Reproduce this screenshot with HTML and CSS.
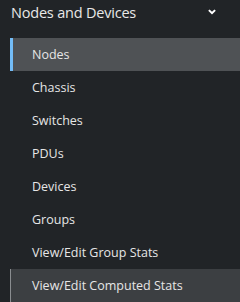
FILE: index.html
```html
<!DOCTYPE html>
<html lang="en">
<head>
  <meta charset="UTF-8">
  <title>Nodes and Devices</title>
  <link rel="stylesheet" href="styles.css">
</head>
<body>

<nav class="nav-grupo">
  <div class="nav-titulo">
    <span>Nodes and Devices</span>
    <svg class="chevron" width="8" height="7" viewBox="0 0 8 7">
      <path d="M0.2 1.8 L1.6 0.4 L4 2.8 L6.4 0.4 L7.8 1.8 L4 5.6 Z" fill="#fff"/>
    </svg>
  </div>
  <ul class="nav-lista">
    <li class="activo">Nodes</li>
    <li>Chassis</li>
    <li>Switches</li>
    <li>PDUs</li>
    <li>Devices</li>
    <li>Groups</li>
    <li>View/Edit Group Stats</li>
    <li class="hover">View/Edit Computed Stats</li>
  </ul>
</nav>

</body>
</html>
```

FILE: styles.css
```css
body {
  margin: 0;
  background: #212427;
  font-family: "Open Sans", sans-serif;
  color: #f0f0f0;
}
.nav-grupo {
  width: 240px;
  height: 302px;
  overflow: hidden;
}
.nav-titulo {
  height: 38px;
  display: flex;
  align-items: flex-start;
  justify-content: space-between;
  padding: 3px 24px 0 11px;
  box-sizing: border-box;
  font-size: 14.5px;
  letter-spacing: -0.2px;
  color: #e8e8e8;
}
.chevron {
  margin-top: 6px;
}
.nav-lista {
  list-style: none;
  margin: 0;
  padding: 0;
}
.nav-lista li {
  height: 33px;
  margin-left: 10px;
  border-left: 3px solid transparent;
  display: flex;
  align-items: center;
  font-size: 12.5px;
  color: #e6e6e6;
  box-sizing: border-box;
  padding-left: 19px;
}
.nav-lista li.activo {
  background: #4f5255;
  border-left-color: #73bcf7;
}
.nav-lista li.hover {
  background: #3c3f42;
  border-left: 1px solid #8a8d90;
  padding-left: 21px;
}
```
